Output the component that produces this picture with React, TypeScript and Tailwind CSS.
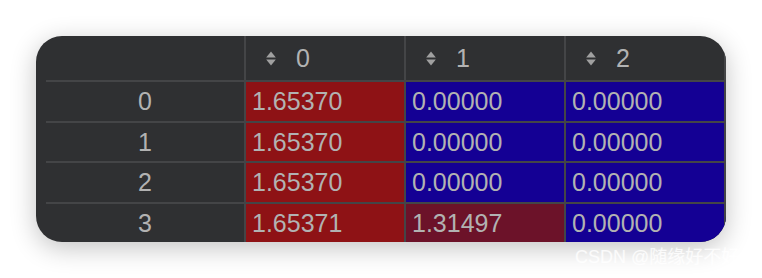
import React from "react";

const SortIcon = () => (
  <svg width="10" height="15" viewBox="0 0 10 15" className="shrink-0">
    <path d="M5 0.5 L9.8 6.5 L0.2 6.5 Z" fill="#a0a0a0" />
    <path d="M5 14.5 L9.8 8.5 L0.2 8.5 Z" fill="#a0a0a0" />
  </svg>
);

const rows = [
  { idx: "0", vals: ["1.65370", "0.00000", "0.00000"], bg: ["bg-[#8e1215]", "bg-[#140094]", "bg-[#140094]"] },
  { idx: "1", vals: ["1.65370", "0.00000", "0.00000"], bg: ["bg-[#8e1215]", "bg-[#140094]", "bg-[#140094]"] },
  { idx: "2", vals: ["1.65370", "0.00000", "0.00000"], bg: ["bg-[#8e1215]", "bg-[#140094]", "bg-[#140094]"] },
  { idx: "3", vals: ["1.65371", "1.31497", "0.00000"], bg: ["bg-[#8e1215]", "bg-[#6c1229]", "bg-[#140094]"] },
];

const heights = ["h-[41px]", "h-[40px]", "h-[41px]", "h-[41px]"];

export default function App() {
  return (
    <div className="w-[762px] h-[278px] bg-white overflow-hidden relative" style={{ fontFamily: "'Liberation Sans', Arial, sans-serif" }}>
      <div className="ml-[36px] mt-[36px] w-[690px] h-[206px] rounded-[26px] bg-[#2f3032] overflow-hidden shadow-[0_6px_26px_rgba(0,0,0,0.24)] pl-[10px]">
        <div className="flex flex-col text-[25px] leading-none text-[#b2b2b2]">
          <div className="flex h-[44px]">
            <div className="w-[200px] border-r-2 border-[#444547]" />
            {["0", "1", "2"].map((h) => (
              <div key={h} className="w-[160px] border-r-2 border-[#444547] flex items-center pl-[20px] gap-[20px] pt-[1px]">
                <SortIcon />
                <span>{h}</span>
              </div>
            ))}
          </div>
          {rows.map((r, i) => (
            <div key={r.idx} className={`flex ${heights[i]} border-t-2 border-[#444547]`}>
              <div className="w-[200px] border-r-2 border-[#444547] flex items-center justify-center">{r.idx}</div>
              {r.vals.map((v, j) => (
                <div key={j} className={`w-[160px] border-r-2 border-[#444547] flex items-center pl-[6px] ${r.bg[j]}`}>
                  {v}
                </div>
              ))}
            </div>
          ))}
        </div>
      </div>
      <div
        className="absolute left-[575px] top-[248px] text-[18px] leading-none text-white/80 whitespace-nowrap"
        style={{ fontFamily: "'Liberation Sans', 'Noto Sans CJK SC', sans-serif" }}
      >
        CSDN @随缘好不好
      </div>
    </div>
  );
}
